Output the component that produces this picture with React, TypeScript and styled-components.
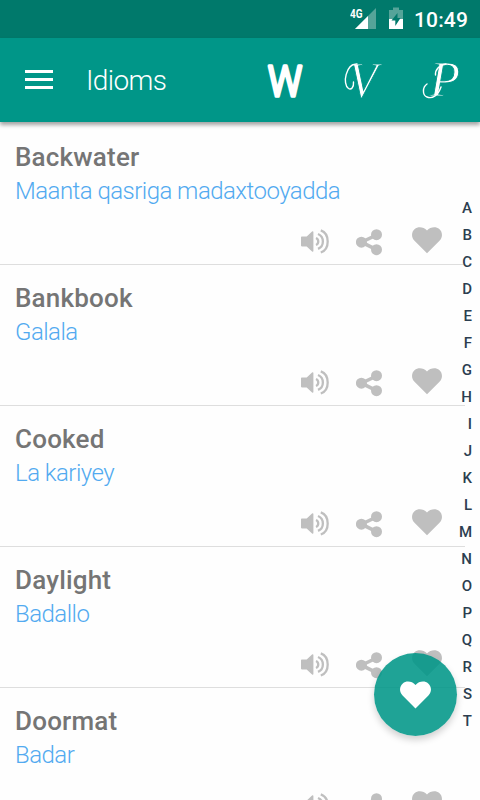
import React from "react";
import styled, { createGlobalStyle } from "styled-components";

const GlobalStyle = createGlobalStyle`
  * { box-sizing: border-box; }
  body { margin: 0; background: #fff; font-family: Roboto, "Noto Sans", sans-serif; }
`;

const Screen = styled.div`
  position: relative;
  width: 480px;
  height: 800px;
  overflow: hidden;
  display: flex;
  flex-direction: column;
  background: #fefefe;
`;

const StatusBar = styled.div`
  flex: none;
  height: 38px;
  display: flex;
  align-items: center;
  justify-content: flex-end;
  padding-right: 12px;
  background: #00796b;
  color: #fff;
`;

const Clock = styled.span`
  width: 54px;
  margin-left: 10px;
  font-size: 21px;
  font-weight: 500;
  line-height: 38px;
  padding-top: 2px;
  letter-spacing: 0.15px;
  white-space: nowrap;
`;

const StatusIcon = styled.svg`
  display: block;
  flex: none;
`;

const Toolbar = styled.header`
  flex: none;
  height: 84px;
  display: flex;
  align-items: center;
  padding-left: 25px;
  background: #009688;
  color: #fff;
  box-shadow: 0 3px 4px rgba(0, 0, 0, 0.36);
  z-index: 1;
`;

const MenuButton = styled.button`
  width: 28px;
  height: 19px;
  margin-top: -1px;
  padding: 0;
  border: 0;
  background: none;
  display: flex;
  flex-direction: column;
  justify-content: space-between;
`;

const MenuBar = styled.span`
  width: 28px;
  height: 3px;
  background: #fff;
`;

const Title = styled.h1`
  flex: 1;
  margin: 2px 0 0 33px;
  font-size: 28px;
  font-weight: 300;
  line-height: 40px;
  letter-spacing: -0.6px;
`;

const ToolbarActions = styled.div`
  display: flex;
`;

const LetterAction = styled.svg`
  display: block;
  width: 79px;
  height: 84px;
  fill: #fff;
`;

const BoldLetter = styled.text`
  font: 300 43px Roboto, sans-serif;
  stroke: #fff;
  stroke-width: 3.6px;
  stroke-linejoin: round;
`;

const ScriptLetter = styled.text`
  font: italic 400 50px "Liberation Serif", serif;
  stroke: #009688;
  stroke-width: 0.9px;
`;

const Swash = styled.path`
  fill: none;
  stroke: #fff;
  stroke-width: 1.4px;
  stroke-linecap: round;
`;

const Entries = styled.main`
  flex: 1;
  min-height: 0;
  padding-top: 2px;
  overflow: hidden;
`;

const Entry = styled.article`
  width: 465px;
  height: 141px;
  padding: 16px 0 0 15px;
  border-bottom: 1px solid #dedede;
`;

const Word = styled.h2`
  margin: 0;
  font-size: 26px;
  font-weight: 500;
  line-height: 34px;
  letter-spacing: 0.2px;
  color: #757575;
`;

const Meaning = styled.p`
  margin: 0;
  font-size: 24px;
  font-weight: 300;
  line-height: 34px;
  letter-spacing: -0.53px;
  color: #52aaf0;
`;

const EntryActions = styled.div`
  display: flex;
  height: 40px;
  margin-top: 13px;
  padding-left: 286px;
  color: #bfbfbf;
`;

const EntryIcon = styled.svg<{ $gap?: number }>`
  display: block;
  flex: none;
  margin-right: ${({ $gap = 0 }) => $gap}px;
`;

const IndexBar = styled.nav`
  position: absolute;
  top: 194px;
  right: 8px;
  display: flex;
  flex-direction: column;
  align-items: flex-end;
`;

const IndexLetter = styled.span`
  height: 27px;
  line-height: 28px;
  font-size: 15px;
  font-weight: 500;
  color: #2c3e50;
`;

const Fab = styled.button`
  position: absolute;
  left: 374px;
  top: 653px;
  width: 83px;
  height: 83px;
  padding: 0;
  border: 0;
  border-radius: 50%;
  display: flex;
  align-items: center;
  justify-content: center;
  background: rgba(0, 150, 136, 0.88);
  color: #fff;
  box-shadow: 0 4px 7px rgba(0, 0, 0, 0.18);
`;

const HEART =
  "M15 26 L2.5 13.5 C-1.2 9.5 -.4 4.5 2.7 1.8 C6 -1 11.6 -.5 15 3.3 C18.4 -.5 24 -1 27.3 1.8 C30.4 4.5 31.2 9.5 27.5 13.5Z";

const entries = [
  { word: "Backwater", meaning: "Maanta qasriga madaxtooyadda" },
  { word: "Bankbook", meaning: "Galala" },
  { word: "Cooked", meaning: "La kariyey" },
  { word: "Daylight", meaning: "Badallo" },
  { word: "Doormat", meaning: "Badar" },
];

function SpeakerIcon() {
  return (
    <EntryIcon width="29" height="40" viewBox="0 0 29 40" $gap={26} fill="none" stroke="currentColor">
      <path d="M.8 16.4H6L11.6 11V30L6 24.6H.8Z" fill="currentColor" strokeWidth="1.6" strokeLinejoin="round" />
      <path d="M15 17C18 18.2 18 22.8 15 24M17 13C23.5 15.8 23.5 25.1 17 27.9M19.8 9.3C29 12.7 29 28.1 19.8 31.5" strokeWidth="2.3" />
    </EntryIcon>
  );
}

function ShareIcon() {
  return (
    <EntryIcon width="28" height="40" viewBox="0 0 28 40" $gap={27} fill="currentColor">
      <path d="M20.5 14L5.5 21.2L20.5 28.6" fill="none" stroke="currentColor" strokeWidth="3.6" />
      <circle cx="5.4" cy="21.2" r="5.5" />
      <circle cx="20.5" cy="13.7" r="5.5" />
      <circle cx="20.5" cy="28.7" r="5.5" />
    </EntryIcon>
  );
}

export default function App() {
  return (
    <>
      <GlobalStyle />
      <Screen>
        <StatusBar>
          <StatusIcon width="54" height="38" viewBox="0 0 54 38">
            <path d="M26 8V29H5Z" fill="#55a499" />
            <path d="M18 16V29H5Z" fill="#fff" />
            <path d="M0 7H13V19H7L0 19Z" fill="#00796b" />
            <text x="0" y="17.5" fontSize="13" fontWeight="700" fill="#fff" textLength="12.5" lengthAdjust="spacingAndGlyphs">4G</text>
            <path d="M39 10H43V7.5H49V10H53V29H39Z" fill="#55a499" />
            <path d="M39 19H53V29H39Z" fill="#fff" />
            <path d="M47.5 13L41.5 20.5H45.3V26L50.5 18H47.5Z" fill="#00796b" />
          </StatusIcon>
          <Clock>10:49</Clock>
        </StatusBar>
        <Toolbar>
          <MenuButton aria-label="Menu">
            <MenuBar />
            <MenuBar />
            <MenuBar />
          </MenuButton>
          <Title>Idioms</Title>
          <ToolbarActions>
            <LetterAction viewBox="0 0 79 84">
              <BoldLetter x="25" y="57.8" textLength="34" lengthAdjust="spacingAndGlyphs">W</BoldLetter>
            </LetterAction>
            <LetterAction viewBox="0 0 79 84">
              <ScriptLetter x="26.5" y="59" textLength="29" lengthAdjust="spacingAndGlyphs">V</ScriptLetter>
              <Swash d="M31.5 44C32 50 29 52 26.5 50.5C20 46 24 25.5 35 26" />
            </LetterAction>
            <LetterAction viewBox="0 0 79 84">
              <ScriptLetter x="29" y="58" textLength="30" lengthAdjust="spacingAndGlyphs">P</ScriptLetter>
              <Swash d="M40 49C37 58 31 61 26 59C21 57 21.5 49 26 46" />
              <Swash d="M34.5 37C34 32 38 27 45 26" />
            </LetterAction>
          </ToolbarActions>
        </Toolbar>
        <Entries>
          {entries.map(({ word, meaning }) => (
            <Entry key={word}>
              <Word>{word}</Word>
              <Meaning>{meaning}</Meaning>
              <EntryActions>
                <SpeakerIcon />
                <ShareIcon />
                <EntryIcon width="32" height="40" viewBox="0 0 32 40">
                  <path d={HEART} transform="translate(1 6.3)" fill="currentColor" />
                </EntryIcon>
              </EntryActions>
            </Entry>
          ))}
        </Entries>
        <IndexBar>
          {"ABCDEFGHIJKLMNOPQRST".split("").map((letter) => (
            <IndexLetter key={letter}>{letter}</IndexLetter>
          ))}
        </IndexBar>
        <Fab aria-label="Favourites">
          <svg width="31" height="28" viewBox="0 0 30 26">
            <path d={HEART} fill="currentColor" />
          </svg>
        </Fab>
      </Screen>
    </>
  );
}
